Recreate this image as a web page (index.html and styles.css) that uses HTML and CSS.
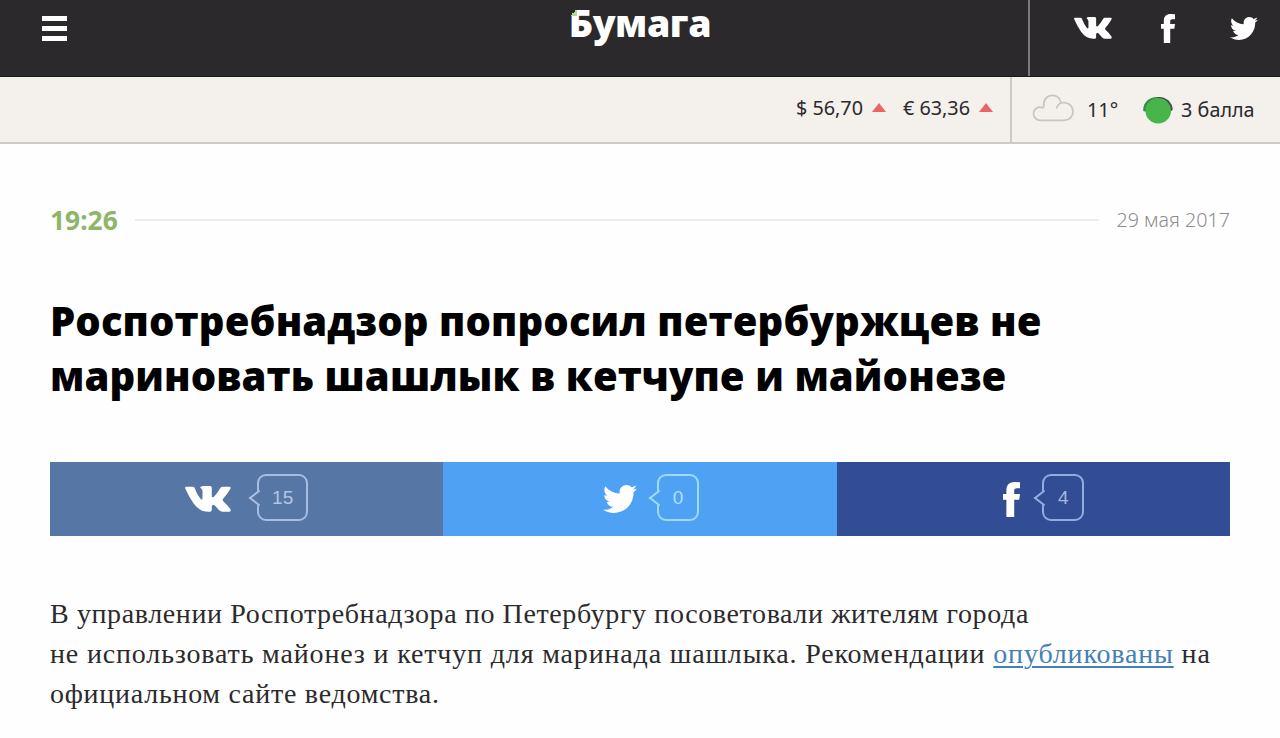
FILE: index.html
```html
<!DOCTYPE html>
<html lang="ru">
<head>
    <meta charset="UTF-8">
    <meta name="viewport" content="width=device-width, initial-scale=1.0">
    <title>Бумага</title>
    <link rel="stylesheet" href="styles.css">
</head>
<body>

    <svg class="symbols">
        <symbol id="vk" viewBox="0 0 45.5 26" preserveAspectRatio="none">
            <path d="M0 2Q0 .8 1.2.8H8Q9 .8 9.5 2Q12 9 15.5 13Q17.3 14.5 17.3 12V5Q17.2 3 15 1.5Q15.5 0 18 0H25Q26.5 0 26.5 2V10Q26.8 12 28.5 11Q32 7 35 2Q35.7.8 37 .8H44Q45.8 1 44.8 3Q42 8 37.5 13Q36.8 14 38 15.5Q42 19 44.8 23Q46 25.5 43.5 25.8H37Q35.5 25.8 33.5 24L29.5 19.5Q27 17.5 26.5 20.5V24Q26.5 25.8 24.5 25.8Q15 26.5 8.5 17.5Q4 11 0 2Z"/>
        </symbol>
        <symbol id="fb" viewBox="0 0 17 35.3" preserveAspectRatio="none">
            <path d="M17 .3V6.3H14C11.8 6.3 11.2 7.2 11.2 9V12.2H17L16.2 18H11.2V35.3H3.4V18H0V12.2H3.4V8.3C3.4 2.8 6.5 0 11.8 0Z"/>
        </symbol>
        <symbol id="tw" viewBox="0 2.2 24 19.6" preserveAspectRatio="none">
            <path d="M23.954 4.569c-.885.389-1.83.654-2.825.775 1.014-.611 1.794-1.574 2.163-2.723-.951.555-2.005.959-3.127 1.184-.896-.959-2.173-1.559-3.591-1.559-2.717 0-4.92 2.203-4.92 4.917 0 .39.045.765.127 1.124C7.691 8.094 4.066 6.13 1.64 3.161c-.427.722-.666 1.561-.666 2.475 0 1.71.87 3.213 2.188 4.096-.807-.026-1.566-.248-2.228-.616v.061c0 2.385 1.693 4.374 3.946 4.827-.413.111-.849.171-1.296.171-.314 0-.615-.03-.916-.086.631 1.953 2.445 3.377 4.604 3.417-1.68 1.319-3.809 2.105-6.102 2.105-.39 0-.779-.023-1.17-.067 2.189 1.394 4.768 2.209 7.557 2.209 9.054 0 13.999-7.496 13.999-13.986 0-.209 0-.42-.015-.63.961-.689 1.8-1.56 2.46-2.548l-.047-.02z"/>
        </symbol>
    </svg>

    <header class="header">
        <div class="header-left">
            <button class="menu" aria-label="Меню"><span></span><span></span><span></span></button>
        </div>
        <a class="logo" href="#">Бумага</a>
        <div class="header-right">
            <nav class="social">
                <a href="#"><svg class="social-vk"><use href="#vk"/></svg></a>
                <a href="#"><svg class="social-fb"><use href="#fb"/></svg></a>
                <a href="#"><svg class="social-tw"><use href="#tw"/></svg></a>
            </nav>
        </div>
    </header>

    <div class="infobar">
        <div class="rates">
            <span>$ 56,70</span><i class="up"></i>
            <span class="euro">€ 63,36</span><i class="up"></i>
        </div>
        <div class="weather">
            <svg class="cloud" viewBox="0 0 42 28">
                <path d="M8 26.3A6.6 6.6 0 0 1 7 13.2Q9 13 11.5 14.3M12 13.5C10.5 6 15 1.3 20.5 1.3C25 1.3 28.2 4.3 28.8 8.6M24.5 14.5C25.5 10 29 8.3 32.5 8.6C37.5 9 41 12.8 41 17.5C41 22.3 37.5 26.3 32.5 26.3H8"/>
            </svg>
            <span class="temp">11°</span>
            <svg class="traffic" viewBox="0 0 30 28">
                <path class="traffic-rim" d="M.3 15C-.5 7 6 1 14 1C18 1 22 2 24 5L4 16Z"/>
                <path class="traffic-dark" d="M14 1C22 .2 29 5 29.8 13.5L26 17L18 8Z"/>
                <circle cx="15.2" cy="14.8" r="12.8"/>
            </svg>
            <span>3 балла</span>
        </div>
    </div>

    <main class="article">
        <div class="meta">
            <time class="time">19:26</time>
            <div class="line"></div>
            <span class="date">29 мая 2017</span>
        </div>

        <h1>Роспотребнадзор попросил петербуржцев не<br>мариновать шашлык в кетчупе и майонезе</h1>

        <div class="share">
            <a class="share-item share-vk" href="#">
                <svg class="icon-vk"><use href="#vk"/></svg>
                <span class="count">15</span>
            </a>
            <a class="share-item share-tw" href="#">
                <svg class="icon-tw"><use href="#tw"/></svg>
                <span class="count">0</span>
            </a>
            <a class="share-item share-fb" href="#">
                <svg class="icon-fb"><use href="#fb"/></svg>
                <span class="count">4</span>
            </a>
        </div>

        <p>
            <span class="row">В управлении Роспотребнадзора по Петербургу посоветовали жителям города</span>
            <span class="row row-wide">не использовать майонез и кетчуп для маринада шашлыка. Рекомендации <a href="#">опубликованы</a> на</span>
            <span class="row row-last">официальном сайте ведомства.</span>
        </p>
    </main>

</body>
</html>
```
FILE: styles.css
```css
* {
    margin: 0;
    padding: 0;
    box-sizing: border-box;
}

body {
    font-family: "Noto Sans", "Open Sans", sans-serif;
    background-color: #fefefe;
    color: #2b292c;
    overflow: hidden;
}

svg {
    display: block;
    fill: currentColor;
}

.symbols {
    display: none;
}

/* Header */
.header {
    display: grid;
    grid-template-columns: 1fr auto 1fr;
    height: 77px;
    background-color: #2b292c;
    color: #fff;
    border-bottom: 1px solid #1c171b;
}

.menu {
    display: flex;
    flex-direction: column;
    gap: 5px;
    width: 25px;
    margin: 16px 0 0 42px;
    background: none;
    border: none;
}

.menu span {
    height: 5px;
    background-color: #fff;
}

.logo {
    font-family: "Open Sans", sans-serif;
    font-size: 37.5px;
    font-weight: 800;
    line-height: 45px;
    letter-spacing: -0.4px;
    color: #fff;
    text-decoration: none;
}

/* folded green corner of the first letter */
.logo::before {
    content: "";
    position: absolute;
    margin: 9px 0 0 1px;
    width: 7px;
    height: 7px;
    background: linear-gradient(135deg, #2b292c 50%, #b5d59b 50%);
}

.header-right {
    display: flex;
    justify-content: flex-end;
}

.social {
    display: flex;
    width: 252px;
    padding-left: 44px;
    border-left: 2px solid #7d7b7e;
}

.social a {
    color: #fff;
}

.social-vk {
    width: 38px;
    height: 22px;
    margin-top: 17px;
}

.social-fb {
    width: 14px;
    height: 29px;
    margin: 14px 0 0 49px;
}

.social-tw {
    width: 28px;
    height: 23px;
    margin: 17px 0 0 55px;
}

/* Rates and weather */
.infobar {
    display: flex;
    justify-content: flex-end;
    height: 67px;
    background-color: #f4f0ec;
    border-bottom: 2px solid #cecaca;
    font-size: 19.8px;
}

.rates {
    display: flex;
    align-items: center;
    padding: 0 17px 4px 0;
}

.up {
    margin-left: 9px;
    border: 7px solid transparent;
    border-top: none;
    border-bottom: 9px solid #ea6565;
}

.euro {
    margin-left: 17px;
}

.weather {
    display: flex;
    align-items: center;
    width: 270px;
    padding-left: 20px;
    border-left: 2px solid #cecaca;
}

.cloud {
    width: 42px;
    height: 28px;
    margin-bottom: 4px;
    fill: none;
    stroke: #c8c5c2;
    stroke-width: 1.8;
}

.temp {
    margin: 0 25px 1px 13px;
}

.traffic {
    width: 30px;
    height: 28px;
    margin-right: 8px;
    fill: #47b549;
}

.traffic-dark {
    fill: #46494b;
}

.traffic-rim {
    fill: #348b45;
}

/* Article */
.article {
    padding: 56px 50px 0;
}

.meta {
    display: flex;
    align-items: center;
    height: 40px;
}

.time {
    font-size: 26.4px;
    font-weight: 700;
    color: #8fb568;
}

.line {
    flex: 1;
    height: 2px;
    margin: 0 17px;
    background-color: #ececec;
}

.date {
    margin-bottom: 2px;
    font-size: 19.7px;
    font-weight: 300;
    color: #8d8d8d;
}

h1 {
    margin-top: 53px;
    font-family: "Open Sans", sans-serif;
    font-size: 40px;
    font-weight: 800;
    line-height: 55px;
    letter-spacing: 0.1px;
    color: #000;
    white-space: nowrap;
}

.share {
    display: grid;
    grid-template-columns: repeat(3, 1fr);
    height: 74px;
    margin-top: 59px;
}

.share-item {
    display: flex;
    align-items: center;
    justify-content: center;
    color: #fff;
    text-decoration: none;
}

.share-vk {
    background-color: #5677a5;
}

.share-tw {
    padding-left: 22px;
    background-color: #4fa1f4;
}

.share-fb {
    padding-left: 21px;
    background-color: #324d94;
}

.icon-vk {
    width: 46px;
    height: 26px;
}

.icon-tw {
    width: 34px;
    height: 28px;
}

.icon-fb {
    width: 17px;
    height: 35px;
}

.count {
    position: relative;
    min-width: 42px;
    height: 47px;
    margin: 0 0 4px 26px;
    padding: 0 13px;
    border: 2px solid #a6bce0;
    border-radius: 9px;
    font-family: "Liberation Sans", Arial, sans-serif;
    font-size: 19px;
    line-height: 43px;
    text-align: center;
    color: #b4c5e0;
}

/* arrow on the left side of the bubble */
.count::before {
    content: "";
    position: absolute;
    left: -6px;
    top: 16px;
    width: 10px;
    height: 10px;
    border: solid #a6bce0;
    border-width: 0 0 2px 2px;
    background: #5677a5;
    clip-path: polygon(0 0, 8% 0, 100% 92%, 100% 100%, 0 100%);
    transform: scaleX(1.3) rotate(45deg);
}

.share-tw .count,
.share-tw .count::before {
    border-color: #a0dafa;
    color: #b0e0fb;
}

.share-tw .count {
    margin-left: 20px;
}

.share-tw .count::before {
    background: #4fa1f4;
}

.share-fb .count,
.share-fb .count::before {
    border-color: #94abe0;
    color: #a6b6e0;
}

.share-fb .count {
    margin-left: 22px;
}

.share-fb .count::before {
    background: #324d94;
}

p {
    margin-top: 58px;
    font-family: Georgia, "Liberation Serif", serif;
    font-size: 28px;
    line-height: 40px;
    color: #2c2a2c;
    white-space: nowrap;
}

.row {
    display: block;
    letter-spacing: 0.61px;
}

.row-wide {
    letter-spacing: 0.84px;
}

.row-last {
    letter-spacing: 0.74px;
}

p a {
    color: #4381b5;
    text-decoration-thickness: 2px;
    text-underline-offset: 3px;
}
```
